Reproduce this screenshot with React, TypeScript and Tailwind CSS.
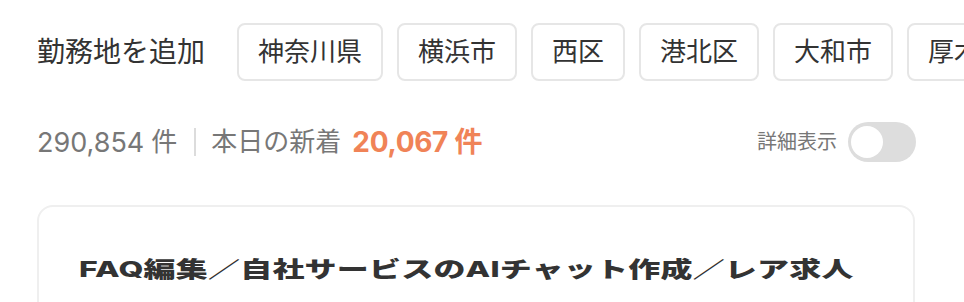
import React from "react";

const chips = ["神奈川県", "横浜市", "西区", "港北区", "大和市", "厚木市", "藤沢市"];

export default function App() {
  return (
    <div
      className="w-[964px] h-[302px] overflow-hidden bg-white pl-[37px]"
      style={{ fontFamily: '"Inter", "Noto Sans CJK JP", sans-serif' }}
    >
      <div className="mt-[23px] flex items-center whitespace-nowrap">
        <div className="text-[28px] leading-none text-[#333] mr-[32px] shrink-0">勤務地を追加</div>
        <div className="flex gap-[14px]">
          {chips.map((c) => (
            <div
              key={c}
              className="h-[58px] px-[19px] shrink-0 flex items-center border-2 border-[#e6e6e6] rounded-[8px] text-[26px] text-[#333] leading-none"
            >
              {c}
            </div>
          ))}
        </div>
      </div>

      <div className="mt-[41px] w-[879px] h-[40px] flex items-center justify-between">
        <div className="flex items-center text-[26px] text-[#777] leading-none whitespace-nowrap">
          <span className="text-[27px]">290,854</span>
          <span className="ml-[7px]">件</span>
          <span className="w-[2px] h-[28px] bg-[#dcdcdc] ml-[17px] mr-[15px]" />
          <span>本日の新着</span>
          <span className="ml-[11px] font-bold text-[28px] text-[#f08357] tracking-[-0.3px]">20,067 件</span>
        </div>
        <div className="flex items-center">
          <span className="text-[20px] text-[#777] mr-[11px] leading-none">詳細表示</span>
          <div className="w-[68px] h-[40px] rounded-full bg-[#dddddd] flex items-center pl-[3px]">
            <div className="w-[32px] h-[32px] rounded-full bg-white" />
          </div>
        </div>
      </div>

      <div className="mt-[43px] w-[878px] h-[200px] border-2 border-[#efefef] rounded-[16px] pt-[39px] pl-[40px]">
        <div className="text-[32px] font-extrabold text-[#333] leading-[48px] whitespace-nowrap scale-y-[0.68] origin-center tracking-[0.2px]">
          FAQ編集／自社サービスのAIチャット作成／レア求人
        </div>
      </div>
    </div>
  );
}
